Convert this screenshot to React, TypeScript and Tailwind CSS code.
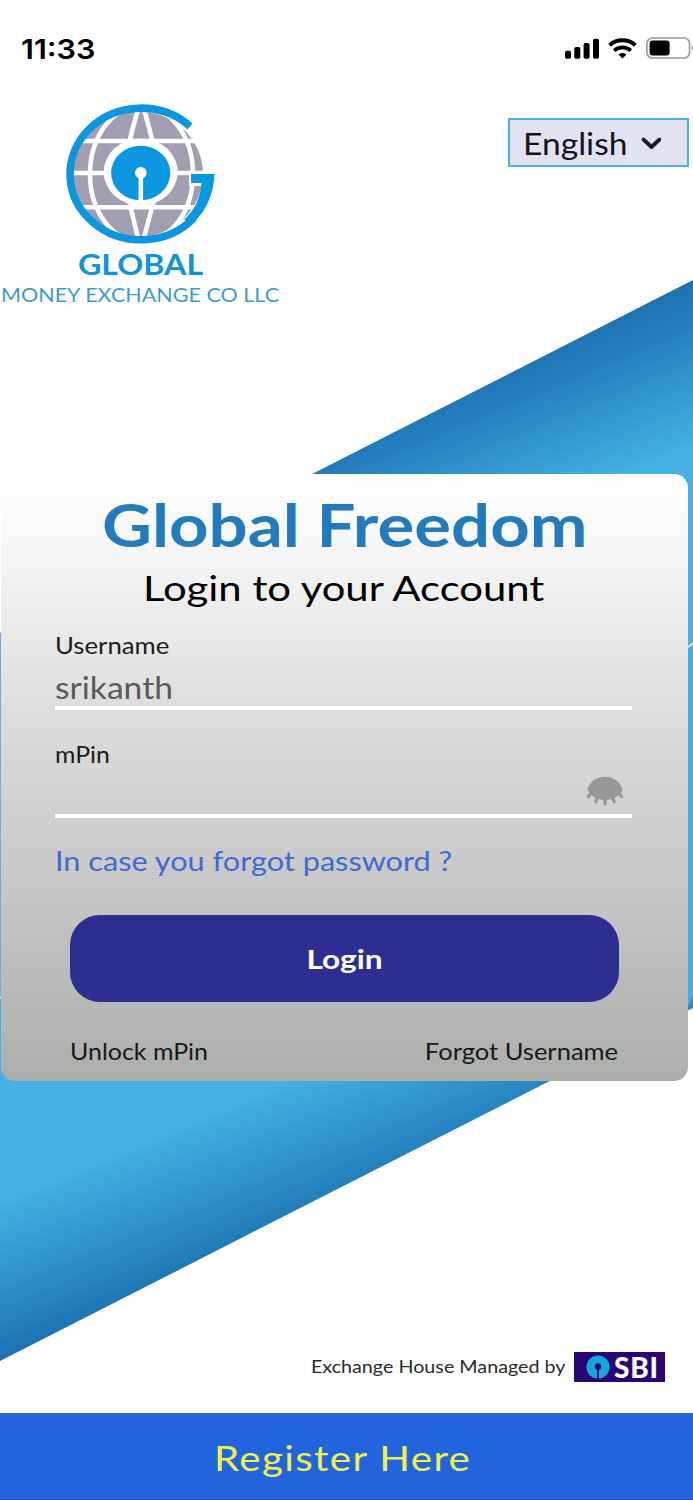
import React, { useState } from 'react';

interface IconProps {
  className?: string;
}

/* ── Status bar ──────────────────────────────────────────── */
const SignalIcon: React.FC<IconProps> = ({ className = '' }) => (
  <svg viewBox="0 0 34 21" className={className}>
    <rect x="0" y="12.8" width="6" height="8" rx="1.8" />
    <rect x="9.3" y="9" width="6" height="11.8" rx="1.8" />
    <rect x="18.6" y="5" width="6" height="15.8" rx="1.8" />
    <rect x="28" y="0.7" width="6" height="20.1" rx="1.8" />
  </svg>
);

const WifiIcon: React.FC<IconProps> = ({ className = '' }) => (
  <svg viewBox="0 0 29 21" className={className} fill="none" stroke="currentColor">
    <path d="M1.6 7.2a19.5 19.5 0 0 1 25.8 0" strokeWidth="4" />
    <path d="M6.2 12.6a12.2 12.2 0 0 1 16.6 0" strokeWidth="3.8" />
    <path d="M14.5 20.6l-4-4.1a5.8 5.8 0 0 1 8 0z" fill="currentColor" stroke="none" />
  </svg>
);

const BatteryIcon: React.FC<IconProps> = ({ className = '' }) => (
  <svg viewBox="0 0 47 22" className={className}>
    <rect x="0.9" y="1" width="42.6" height="20" rx="5.5" fill="#fff" stroke="#9b9b9b" strokeWidth="1.6" />
    <rect x="3.6" y="3.6" width="20" height="14.8" rx="3" fill="#000" />
    <path d="M45.6 8v6c1-.6 1.4-1.6 1.4-3s-.4-2.4-1.4-3z" fill="#9b9b9b" />
  </svg>
);

/* ── Logos ───────────────────────────────────────────────── */
const GlobeLogo: React.FC<IconProps> = ({ className = '' }) => (
  <svg viewBox="60 100 160 148" className={className} fill="none">
    <ellipse cx="137" cy="174" rx="66" ry="63" fill="#a29db1" />
    {/* meridians and parallels */}
    <g stroke="#fff" strokeWidth="4.6">
      <ellipse cx="141.5" cy="174" rx="51.5" ry="68" />
      <path d="M138.5 108Q134 122 128 148M143.5 108Q148 122 154 148" />
      <path d="M138.5 240Q134 222 129 200M143.5 240Q148 222 154 200" />
      <path d="M70 141H206M70 173H206M70 207.3H206" />
    </g>
    {/* clear the globe around the tail of the G */}
    <path d="M189 171.5H206V186H189Z" fill="#fff" />
    <ellipse cx="140.7" cy="172" rx="37" ry="33.5" fill="#fff" />
    <ellipse cx="140.7" cy="173" rx="29.6" ry="27.3" fill="#0b97e0" />
    <circle cx="140.8" cy="172.8" r="5.9" fill="#fff" />
    <path d="M140.8 174V201" stroke="#fff" strokeWidth="4.6" />
    {/* letter ring */}
    <path d="M190 126.3A71 65.8 0 1 0 194 217.8" stroke="#0b97e0" strokeWidth="7.6" />
    <path d="M191 174H214.5C213.5 195 206 210 194.5 222L184 219.500C194 211 200 200 201.500 183H191Z" fill="#0b97e0" />
  </svg>
);

const SbiLogo: React.FC = () => (
  <div className="flex h-[30px] w-[91px] items-center bg-[#2a0575] pl-[12px]">
    <svg viewBox="0 0 24 24" className="h-[24px] w-[24px]">
      <circle cx="12" cy="12" r="11.6" fill="#12a6dc" />
      <circle cx="12" cy="11.4" r="3.2" fill="#2a0575" />
      <path d="M11 12h2v12h-2z" fill="#2a0575" />
    </svg>
    <span className="ml-[4px] text-[28px] leading-[30px] font-black tracking-[0.8px] text-white">SBI</span>
  </div>
);

const ClosedEyeIcon: React.FC<IconProps> = ({ className = '' }) => (
  <svg viewBox="0 0 38 30" className={className} fill="#979797" stroke="#979797">
    <path d="M1.5 13.2C4 5.500 11 .8 19 .8s15 4.700 17.500 12.400C34.500 19.500 27 23.800 19 23.800S3.500 19.500 1.500 13.200z" stroke="none" />
    <path
      d="M5.2 17L2.4 20.5M12 21L9.7 25.8M19 22v6M26 21l2.3 4.8M32.8 17l2.8 3.5"
      strokeWidth="3.2"
      strokeLinecap="round"
    />
  </svg>
);

/* Diagonal blue band behind the card */
const Backdrop: React.FC = () => (
  <svg viewBox="0 0 693 1500" className="absolute inset-0 h-[1500px] w-[693px]">
    <defs>
      <linearGradient id="band" gradientUnits="userSpaceOnUse" x1="693" y1="280" x2="975" y2="951">
        <stop offset="0" stopColor="#1e71b1" />
        <stop offset="0.06" stopColor="#2580bf" />
        <stop offset="0.21" stopColor="#45b0e1" />
        <stop offset="0.8" stopColor="#45b0e1" />
        <stop offset="0.93" stopColor="#2a88c5" />
        <stop offset="1" stopColor="#1e71b1" />
      </linearGradient>
    </defs>
    <path d="M0 633L693 280V1008L0 1361Z" fill="url(#band)" />
    <path d="M686 648Q690 646 693 643V996L686 1010Z" fill="#3eaee9" />
    <path d="M686 648Q690 646.5 693 643" fill="none" stroke="#e8f6fd" strokeWidth="1.6" />
    <path d="M0 633H4V997H0Z" fill="#6cabe4" />
    <path d="M0 997.5H3" stroke="#e8f6fd" strokeWidth="1.5" />
  </svg>
);

export default function App() {
  const [username, setUsername] = useState('srikanth');
  const [mpin, setMpin] = useState('');

  return (
    <div className="relative flex h-[1500px] w-full flex-col overflow-hidden bg-white font-['Lato',sans-serif] text-black">
      <Backdrop />

      {/* Status bar */}
      <div className="relative flex h-[100px] items-start justify-between pt-[36px] pl-[21px]">
        <span className="origin-left scale-x-[1.13] font-['Inter',sans-serif] text-[27px] leading-[27px] font-semibold">
          11:33
        </span>
        <div className="flex items-center gap-[9px] pt-[1px]">
          <SignalIcon className="h-[21px] w-[34px]" />
          <WifiIcon className="h-[21px] w-[29px]" />
          <BatteryIcon className="h-[22px] w-[47px]" />
        </div>
      </div>

      <header className="relative flex h-[374px] items-start justify-between pr-1">
        <div className="flex flex-col items-start whitespace-nowrap">
          <GlobeLogo className="ml-[60px] h-[148px] w-[160px]" />
          <span className="mt-px ml-[78px] origin-left scale-x-[1.11] text-[29px] leading-[30px] font-bold text-[#1093d8]">
            GLOBAL
          </span>
          <span className="mt-[6px] ml-px origin-left scale-x-[1.133] text-[19px] leading-[20px] text-[#3f9bcb]">
            MONEY EXCHANGE CO LLC
          </span>
        </div>
        <button className="mt-[18px] flex h-[49px] w-[181px] items-center border-2 border-[#4fb0e6] bg-[#e1e3f0] pl-[13px] text-[30px] leading-[30px] text-[#14141c]">
          <span className="w-[105px] origin-left scale-x-[1.12] text-left">English</span>
          <svg viewBox="0 0 20 14" className="mt-[3px] ml-[13px] h-[14px] w-[20px]" fill="none" stroke="#1c1c26" strokeWidth="3.8">
            <path d="M2.5 2.5L10.500 10L18.500 2.5" strokeLinecap="round" strokeLinejoin="round" />
          </svg>
        </button>
      </header>

      {/* Login card */}
      <main className="relative ml-px flex h-[607px] w-[687px] flex-col rounded-[14px] bg-[linear-gradient(to_bottom,#fff_0%,#f5f5f5_14%,#dedede_38%,#c5c6c5_69%,#acaeac_100%)] pt-[20px] whitespace-nowrap">
        <h1 className="ml-[101px] origin-left self-start scale-x-[1.168] text-[59px] leading-[62px] font-bold text-[#237bbd]">
          Global Freedom
        </h1>
        <h2 className="mt-[11px] ml-[142px] origin-left self-start scale-x-[1.195] text-[35px] leading-[40px]">
          Login to your Account
        </h2>

        <div className="mt-[26px] ml-[54px] flex w-[577px] flex-col items-start text-[#1c1c1c]">
          <label className="origin-left scale-x-[1.119] text-[23px] leading-[24px]">Username</label>
          <div className="mt-[12px] h-[41px] w-full border-b-4 border-white">
            <input
              value={username}
              onChange={e => setUsername(e.target.value)}
              className="h-[36px] w-[500px] origin-left scale-x-[1.12] text-[30px] leading-[34px] text-[#5a5a5a] outline-none"
            />
          </div>
          <label className="mt-[32px] origin-left scale-x-[1.08] text-[23px] leading-[24px]">mPin</label>
          <div className="flex h-[52px] w-full items-start border-b-4 border-white pt-[10px] pr-[8px]">
            <input
              type="password"
              value={mpin}
              onChange={e => setMpin(e.target.value)}
              className="h-[34px] flex-1 text-[30px] outline-none"
            />
            <ClosedEyeIcon className="h-[30px] w-[38px]" />
          </div>
          <a className="mt-[28px] origin-left scale-x-[1.18] text-[26px] leading-[30px] text-[#3d6bd2]">
            In case you forgot password ?
          </a>
        </div>

        <button className="mt-[39px] ml-[69px] h-[87px] w-[549px] rounded-[30px] bg-[#2d2e92] pt-px text-[27px] leading-[30px] font-bold text-white">
          <span className="inline-block scale-x-[1.17]">Login</span>
        </button>

        <div className="mt-[37px] flex justify-between pr-[70px] pl-[69px] text-[23px] leading-[24px] text-[#181818]">
          <a className="origin-left scale-x-[1.085]">Unlock mPin</a>
          <a className="origin-right scale-x-[1.11]">Forgot Username</a>
        </div>
      </main>

      <div className="relative mt-auto mb-[31px] flex items-center justify-end gap-[8px] pr-[28px]">
        <span className="origin-right scale-x-[1.16] text-[17px] leading-[20px] text-[#2a2a2a]">
          Exchange House Managed by
        </span>
        <SbiLogo />
      </div>

      <footer className="relative flex h-[87px] items-center border-b border-[#1c52ad] bg-[#2264dd] pt-[2px] text-[35px] leading-[40px] text-[#f2f04c]">
        <a className="ml-[214px] origin-left scale-x-[1.15] tracking-[1.2px]">Register Here</a>
      </footer>
    </div>
  );
}
